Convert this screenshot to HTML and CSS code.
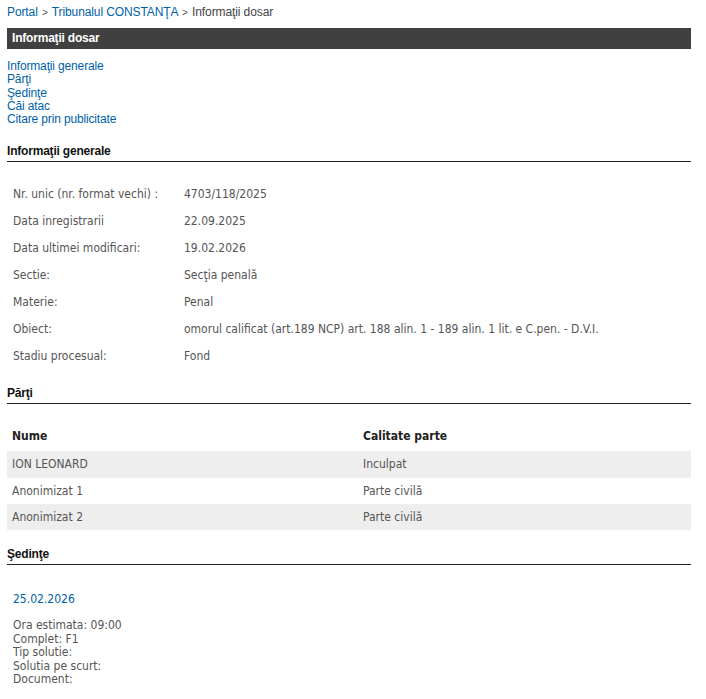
FILE: index.html
```html
<!DOCTYPE html>
<html lang="ro">
<head>
    <meta charset="UTF-8">
    <title>Informaţii dosar</title>
    <link rel="stylesheet" href="styles.css">
</head>
<body>
<div class="page">

  <div class="breadcrumb">
    <a href="#">Portal</a> <span class="sep">&gt;</span> <a href="#">Tribunalul CONSTANŢA</a> <span class="sep">&gt;</span> <span class="current">Informaţii dosar</span>
  </div>

  <h1 class="title-bar">Informaţii dosar</h1>

  <!-- ===================== MENIU ===================== -->
  <div class="menu">
    <a href="#info">Informaţii generale</a>
    <a href="#parti">Părţi</a>
    <a href="#sedinte">Şedinţe</a>
    <a href="#cai">Căi atac</a>
    <a href="#citare">Citare prin publicitate</a>
  </div>

  <!-- ===================== INFORMATII GENERALE ===================== -->
  <h2 class="section-title" id="info">Informaţii generale</h2>
  <table class="info-table">
    <tr><td class="lbl">Nr. unic (nr. format vechi) :</td><td>4703/118/2025</td></tr>
    <tr><td class="lbl">Data inregistrarii</td><td>22.09.2025</td></tr>
    <tr><td class="lbl">Data ultimei modificari:</td><td>19.02.2026</td></tr>
    <tr><td class="lbl">Sectie:</td><td>Secţia penală</td></tr>
    <tr><td class="lbl">Materie:</td><td>Penal</td></tr>
    <tr><td class="lbl">Obiect:</td><td>omorul calificat (art.189 NCP) art. 188 alin. 1 - 189 alin. 1 lit. e C.pen. - D.V.I.</td></tr>
    <tr><td class="lbl">Stadiu procesual:</td><td>Fond</td></tr>
  </table>

  <!-- ===================== PARTI ===================== -->
  <h2 class="section-title" id="parti">Părţi</h2>
  <table class="parti-table">
    <thead>
      <tr><th class="col-nume">Nume</th><th>Calitate parte</th></tr>
    </thead>
    <tbody>
      <tr class="alt"><td>ION LEONARD</td><td>Inculpat</td></tr>
      <tr><td>Anonimizat 1</td><td>Parte civilă</td></tr>
      <tr class="alt"><td>Anonimizat 2</td><td>Parte civilă</td></tr>
    </tbody>
  </table>

  <!-- ===================== SEDINTE ===================== -->
  <h2 class="section-title" id="sedinte">Şedinţe</h2>
  <div class="sedinta">
    <a href="#" class="sedinta-data">25.02.2026</a>
    <div class="sedinta-det">
      Ora estimata: 09:00<br>
      Complet: F1<br>
      Tip solutie:<br>
      Solutia pe scurt:<br>
      Document:
    </div>
  </div>

</div>
</body>
</html>
```

FILE: styles.css
```css
body { margin: 0; font-family: "Liberation Sans", Arial, sans-serif; font-size: 12px; color: #333; background: #fff; }
a { color: #005fa8; text-decoration: none; }
.page { width: 684px; padding: 4px 7px; }

.breadcrumb { height: 16px; line-height: 16px; color: #444; letter-spacing: -0.1px; }
.breadcrumb .sep { font-size: 10px; color: #555; margin: 0 1px; }
.breadcrumb .current { color: #444; }

.title-bar {
    margin: 8px 0 0;
    height: 21px;
    line-height: 21px;
    padding: 0 5px;
    background-color: #404040;
    color: #fff;
    font-size: 12px;
    font-weight: bold;
    letter-spacing: -0.2px;
}

.menu { margin: 11px 0 2px; line-height: 13.25px; letter-spacing: -0.15px; }
.menu a { display: block; }

.section-title {
    margin: 16px 0 0;
    padding: 0 0 2px;
    font-size: 12px;
    font-weight: bold;
    color: #111;
    border-bottom: 1px solid #222;
    line-height: 16px;
    letter-spacing: -0.2px;
}
.menu + .section-title { margin-top: 17px; }

.info-table, .parti-table {
    width: 100%;
    border-collapse: collapse;
    font-family: "DejaVu Sans Condensed", Tahoma, sans-serif;
    font-size: 12px;
    color: #555;
}
.info-table { margin-top: 18px; }
.info-table td { height: 27px; padding: 0 6px; vertical-align: middle; }
.info-table td.lbl { width: 159px; }

.parti-table { margin-top: 17px; }
.parti-table th { height: 30px; text-align: left; padding: 0 5px; color: #222; font-weight: bold; }
.parti-table th.col-nume { width: 341px; }
.parti-table td { height: 26.33px; padding: 0 5px; }
.parti-table tr.alt td { background-color: #eee; }

.sedinta { padding: 0 6px; font-family: "DejaVu Sans Condensed", Tahoma, sans-serif; font-size: 12px; color: #555; }
.sedinta-data { display: block; margin-top: 27px; }
.sedinta-det { margin-top: 13px; line-height: 13.5px; }
```
